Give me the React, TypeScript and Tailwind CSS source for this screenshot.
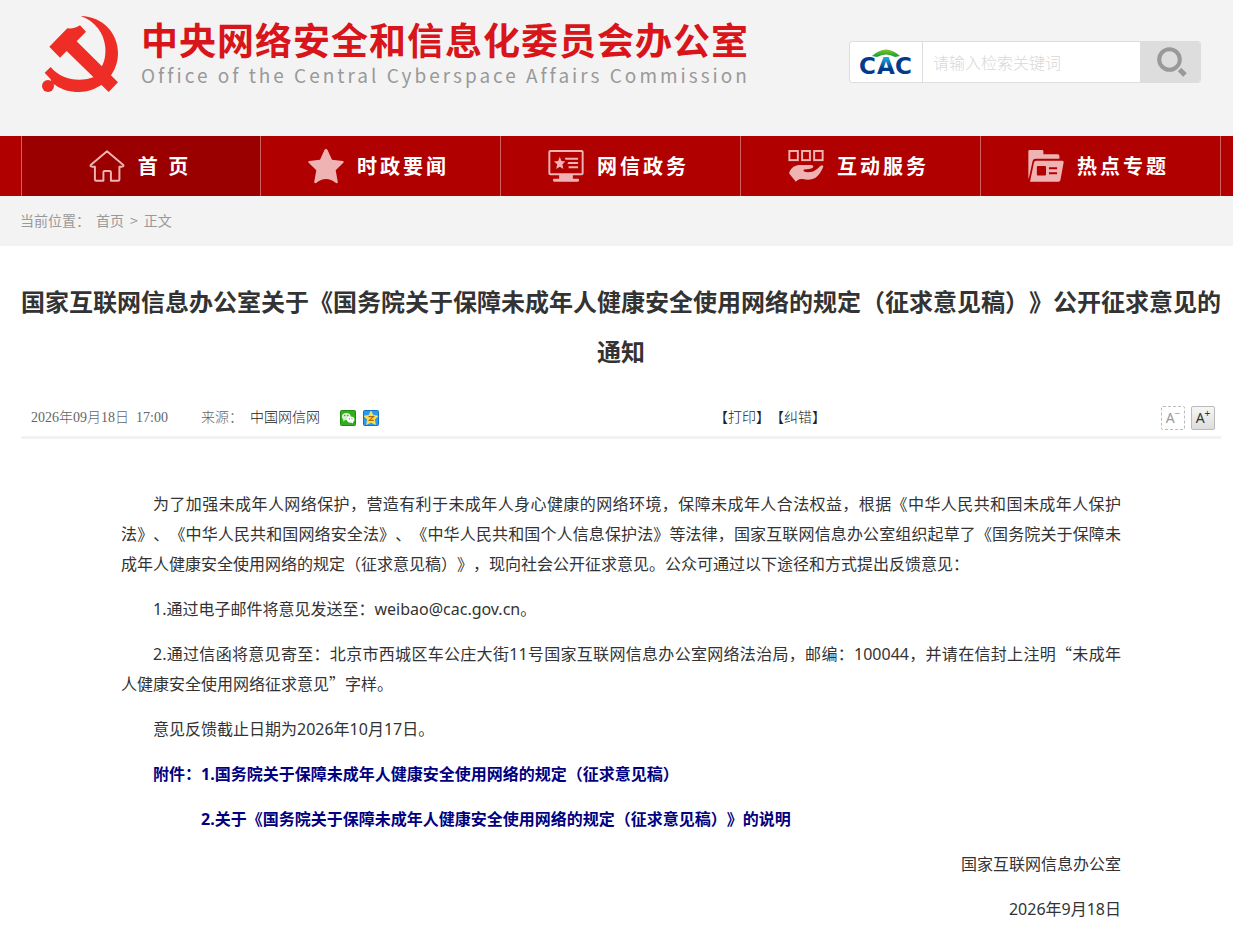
import type { ReactNode } from 'react';
import { clsx } from 'clsx';

interface NavItem {
  label: string;
  icon: ReactNode;
  active?: boolean;
}

const BODY_FONT = "font-['Noto_Sans','Noto_Sans_CJK_SC',sans-serif]";
const CJK_FONT = "font-['Noto_Sans_CJK_SC',sans-serif]";
const META_FONT = "font-['Liberation_Serif','Noto_Sans_CJK_SC',serif]";

const navItems: NavItem[] = [
  { label: '首 页', icon: <HomeIcon />, active: true },
  { label: '时政要闻', icon: <StarIcon /> },
  { label: '网信政务', icon: <MonitorIcon /> },
  { label: '互动服务', icon: <ServiceIcon /> },
  { label: '热点专题', icon: <FolderIcon /> },
];

function HomeIcon() {
  return (
    <svg viewBox="0 0 108 98" className="w-9 h-8" fill="none" stroke="#f0b3b3" strokeWidth="6" strokeLinejoin="round">
      <path d="M54 4 L104 46 Q106 50 100 51 L92 51 V90 Q92 94 88 94 H66 V68 Q66 64 62 64 H47 Q43 64 43 68 V94 H21 Q17 94 17 90 V51 L8 51 Q2 50 4 46 Z" />
    </svg>
  );
}

function StarIcon() {
  return (
    <svg viewBox="0 0 108 106" className="w-9 h-9" fill="#f0b3b3">
      <path d="M54 1 Q57 1 59 6 L72 34 L104 38 Q109 39 106 43 L83 66 L89 99 Q90 106 84 104 Q54 80 24 104 Q18 106 19 99 L25 66 L2 43 Q-1 39 4 38 L36 34 L49 6 Q51 1 54 1 Z" />
    </svg>
  );
}

function MonitorIcon() {
  return (
    <svg viewBox="0 0 108 98" className="w-9 h-8" fill="#f0b3b3">
      <rect x="3" y="3" width="102" height="71" rx="3" fill="none" stroke="#f0b3b3" strokeWidth="6" />
      <path d="M35 21 L40 34 L52 35 L43 44 L46 58 L35 51 L24 58 L27 44 L17 35 L30 34 Z" />
      <path d="M50 24 H91 V30 H53 Z M62 37 H91 V43 H58 Z M62 50 H91 V56 H62 Z" />
      <path d="M33 76 H75 V88 H91 Q94 88 94 92 Q94 97 90 97 H18 Q14 97 14 92 Q14 88 18 88 H33 Z" />
    </svg>
  );
}

function ServiceIcon() {
  return (
    <svg viewBox="0 0 108 98" className="w-9 h-8" fill="#f0b3b3">
      <g fill="none" stroke="#f0b3b3" strokeWidth="6">
        <rect x="3" y="3" width="26" height="28" />
        <rect x="42" y="3" width="24" height="28" />
        <rect x="79" y="3" width="26" height="28" />
      </g>
      <path d="M3 67 Q12 48 32 46 H70 Q78 47 76 53 Q74 57 64 58 L48 60 Q44 62 48 66 Q58 70 76 66 Q88 60 98 49 Q106 44 107 51 Q98 74 82 86 Q66 94 44 89 Q34 88 29 92 L23 97 L3 73 Z" />
    </svg>
  );
}

function FolderIcon() {
  return (
    <svg viewBox="0 0 108 98" className="w-9 h-8" fill="#f0b3b3">
      <path d="M0 4 Q0 0 4 0 H42 Q46 0 46 4 V13 H90 Q95 13 95 18 V27 H22 Q15 27 13 34 L2 84 L0 88 Z" />
      <path
        fillRule="evenodd"
        d="M24 33 H104 Q109 33 108 38 L98 93 Q97 97 92 97 H5 L17 39 Q18 33 24 33 Z M29 49 Q26 49 26 52 V75 Q26 78 29 78 H51 Q54 78 54 75 V52 Q54 49 51 49 Z M63 53 V59 H88 V53 Z M63 68 V74 H88 V68 Z"
      />
    </svg>
  );
}

function PartyEmblem() {
  return (
    <svg viewBox="36 18 228 228" className="w-[76px] h-[76px] shrink-0" fill="#ee2d26" aria-hidden="true">
      <path d="M152 18 C220 20 264 70 264 130 C264 195 210 246 147 246 C118 246 92 238 75 224 L66 222 L62 208 L44 188 L62 171 C85 198 115 209 147 209 C165 209 180 206 192 201 L216 168 C226 150 227 130 226 112 C222 68 196 34 152 18 Z" />
      <path d="M58 110 L112 55 Q135 57 150 46 L168 65 L140 94 L264 217 L236 246 L110 123 L90 143 Z" />
      <circle cx="54" cy="228" r="18" />
    </svg>
  );
}

function CacLogo() {
  return (
    <svg viewBox="0 -4 54 34" className="w-[54px] h-[34px] overflow-visible" role="img" aria-label="CAC">
      <defs>
        <linearGradient id="cac-a" x1="0" y1="0" x2="0" y2="1">
          <stop offset="0.2" stopColor="#1aa5e0" />
          <stop offset="0.6" stopColor="#023a8c" />
        </linearGradient>
        <linearGradient id="cac-arc" x1="0" y1="0" x2="0" y2="1">
          <stop offset="0" stopColor="#8cc21f" />
          <stop offset="1" stopColor="#0a9c48" />
        </linearGradient>
      </defs>
      <path d="M13 7 Q27 -6 41 7 L36 8 Q27 3 18 8 Z" fill="url(#cac-arc)" />
      <g className="font-['DejaVu_Sans',sans-serif] font-bold" fontSize="23">
        <text x="0" y="25" fill="#023a8c">C</text>
        <text x="18" y="25" fill="url(#cac-a)">A</text>
        <text x="36" y="25" fill="#023a8c">C</text>
      </g>
    </svg>
  );
}

function WechatIcon() {
  return (
    <svg viewBox="0 0 16 16" className="w-4 h-4">
      <rect x="0.5" y="0.5" width="15" height="15" rx="1" fill="#36ab22" stroke="#1d8f0f" />
      <ellipse cx="6.3" cy="6.5" rx="4.4" ry="3.6" fill="#d5f0cd" />
      <path d="M3.5 9 L3 11.5 L6 9.8 Z" fill="#d5f0cd" />
      <ellipse cx="10.6" cy="9.6" rx="3.8" ry="3.1" fill="#fff" />
      <path d="M11 12 L13 13.6 L13 11.5 Z" fill="#fff" />
      <g fill="#2aa515">
        <circle cx="4.8" cy="5.5" r="0.7" />
        <circle cx="7.8" cy="5.5" r="0.7" />
        <circle cx="9.4" cy="8.8" r="0.6" />
        <circle cx="12" cy="8.8" r="0.6" />
      </g>
    </svg>
  );
}

function QzoneIcon() {
  return (
    <svg viewBox="0 0 16 16" className="w-4 h-4">
      <rect x="0.5" y="0.5" width="15" height="15" rx="1" fill="#2f9be8" stroke="#1273c4" />
      <path
        d="M8 1 L10.1 5.4 L15 6 L11.5 9.5 L12.4 14.5 L8 12.2 L3.6 14.5 L4.5 9.5 L1 6 L5.9 5.4 Z"
        fill="#ffdd3c"
        stroke="#ffe98a"
        strokeWidth="0.6"
      />
      <path d="M5.5 6.6 H10.4 L6.4 10.4 H10.8" fill="none" stroke="#b06a10" strokeWidth="1.2" />
    </svg>
  );
}

function Header() {
  return (
    <header className="bg-[#f3f3f3]">
      <div className="mx-auto flex max-w-[1233px] items-start justify-between pl-[42px] pr-8 pb-11">
        <a href="#" className="flex pt-4">
          <PartyEmblem />
          <span className="ml-[23px] block">
            <span className={clsx(CJK_FONT, 'block text-[37px] leading-[46px] font-bold tracking-[1px] text-[#d7151a] whitespace-nowrap')}>
              中央网络安全和信息化委员会办公室
            </span>
            <span className={clsx(CJK_FONT, 'mt-[3px] block text-[19px] leading-5 tracking-[3px] text-[#999] whitespace-nowrap')}>
              Office of the Central Cyberspace Affairs Commission
            </span>
          </span>
        </a>

        {/* Search */}
        <form className="mt-[41px] flex h-[42px] w-[352px] overflow-hidden rounded-[3px] border border-[#ddd] bg-white">
          <a href="#" className="flex w-[73px] shrink-0 items-center justify-center border-r border-[#ddd]">
            <CacLogo />
          </a>
          <input
            type="text"
            aria-label="请输入检索关键词"
            placeholder="请输入检索关键词"
            className={clsx(CJK_FONT, 'min-w-0 flex-1 px-2.5 text-base font-light outline-none placeholder:text-[#d8d8d8]')}
          />
          <button type="button" aria-label="检索" className="flex w-[60px] shrink-0 items-center justify-center bg-[#ddd] pl-1">
            <svg viewBox="0 0 30 30" className="w-[30px] h-[30px]" fill="none" stroke="#999">
              <circle cx="12.5" cy="12.5" r="10.3" strokeWidth="4" />
              <path d="M22.5 22.5 L28 28" strokeWidth="5" />
            </svg>
          </button>
        </form>
      </div>
    </header>
  );
}

function MainNav() {
  return (
    <nav className="bg-[#b10000]">
      <ul className="mx-auto grid max-w-[1233px] grid-cols-5 pl-[21px] pr-3">
        {navItems.map((item) => (
          <li
            key={item.label}
            className={clsx(
              'h-[60px] border-r border-[#d06060] first:border-l',
              item.active && 'bg-[#9b0000]'
            )}
          >
            <a
              href="#"
              className={clsx(
                CJK_FONT,
                'flex h-full items-center justify-center gap-[13px] text-xl font-bold tracking-[3px] text-white',
                item.active ? 'pr-0.5' : 'pr-1'
              )}
            >
              {item.icon}
              <span className="whitespace-pre">{item.label}</span>
            </a>
          </li>
        ))}
      </ul>
    </nav>
  );
}

function Breadcrumb() {
  return (
    <div className="bg-[#f3f3f3]">
      <div className={clsx(CJK_FONT, 'mx-auto flex h-[50px] max-w-[1233px] items-center pb-0.5 pl-5 pr-3 text-sm text-[#999]')}>
        <span className="mr-1.5">当前位置：</span>
        <a href="#">首页</a>
        <span className="mx-1.5">&gt;</span>
        <a href="#">正文</a>
      </div>
    </div>
  );
}

function ArticleMeta() {
  return (
    <div className={clsx(META_FONT, 'mt-6 flex h-[39px] items-center justify-between border-b-[3px] border-[#f2f2f2] pl-2.5 pr-1.5 text-sm text-[#333]')}>
      <div className="flex items-center font-light text-[#666]">
        <span className="w-[170px]">2026年09月18日&nbsp; 17:00</span>
        <span className="mr-[7px]">来源：</span>
        <span className="mr-5 text-[#222]">中国网信网</span>
        <button type="button" aria-label="微信" className="mr-[7px]">
          <WechatIcon />
        </button>
        <button type="button" aria-label="QQ空间">
          <QzoneIcon />
        </button>
      </div>
      <div className="flex font-light text-[#222]">
        <button type="button">【打印】</button>
        <button type="button">【纠错】</button>
      </div>
      <div className="flex gap-1.5 font-['Noto_Sans',sans-serif] leading-none">
        <button type="button" className="flex h-6 w-6 items-center justify-center rounded-xs border border-dashed border-[#bbb] text-[#999]">
          A<sup className="text-[10px]">−</sup>
        </button>
        <button type="button" className="flex h-6 w-6 items-center justify-center rounded-xs border border-[#bbb] bg-linear-to-b from-[#f6f6f6] to-[#ddd] text-[#333]">
          A<sup className="text-[10px]">+</sup>
        </button>
      </div>
    </div>
  );
}

export default function App() {
  return (
    <div lang="zh-CN" className={clsx(BODY_FONT, 'min-h-screen bg-white text-[#333] [text-spacing-trim:space-all]')}>
      <Header />
      <MainNav />
      <Breadcrumb />

      <main className="mx-auto max-w-[1233px] pl-[21px] pr-3 pt-[30px]">
        <h1 className={clsx(CJK_FONT, 'text-center text-2xl leading-[50px] font-bold')}>
          国家互联网信息办公室关于《国务院关于保障未成年人健康安全使用网络的规定（征求意见稿）》公开征求意见的通知
        </h1>

        <ArticleMeta />

        {/* Article body */}
        <article className="mt-[50px] space-y-[15px] px-[100px] text-justify text-base leading-[30px]">
          <p className="indent-8">
            为了加强未成年人网络保护，营造有利于未成年人身心健康的网络环境，保障未成年人合法权益，根据《中华人民共和国未成年人保护法》、《中华人民共和国网络安全法》、《中华人民共和国个人信息保护法》等法律，国家互联网信息办公室组织起草了《国务院关于保障未成年人健康安全使用网络的规定（征求意见稿）》，现向社会公开征求意见。公众可通过以下途径和方式提出反馈意见：
          </p>
          <p className="indent-8">1.通过电子邮件将意见发送至：weibao@cac.gov.cn。</p>
          <p className="indent-8">
            2.通过信函将意见寄至：北京市西城区车公庄大街11号国家互联网信息办公室网络法治局，邮编：100044，并请在信封上注明
            <span className={clsx(CJK_FONT, 'leading-none')}>“</span>未成年<span className="whitespace-nowrap">人健康</span>安全使用网络征求意见<span className={clsx(CJK_FONT, 'leading-none')}>”</span>字样。
          </p>
          <p className="indent-8">意见反馈截止日期为2026年10月17日。</p>
          <p className="indent-8 font-bold text-[#000080]">
            附件：<a href="#">1.国务院关于保障未成年人健康安全使用网络的规定（征求意见稿）</a>
          </p>
          <p className="indent-20 font-bold text-[#000080]">
            <a href="#">2.关于《国务院关于保障未成年人健康安全使用网络的规定（征求意见稿）》的说明</a>
          </p>
          <p className="text-right">国家互联网信息办公室</p>
          <p className="text-right">2026年9月18日</p>
        </article>
      </main>
    </div>
  );
}
